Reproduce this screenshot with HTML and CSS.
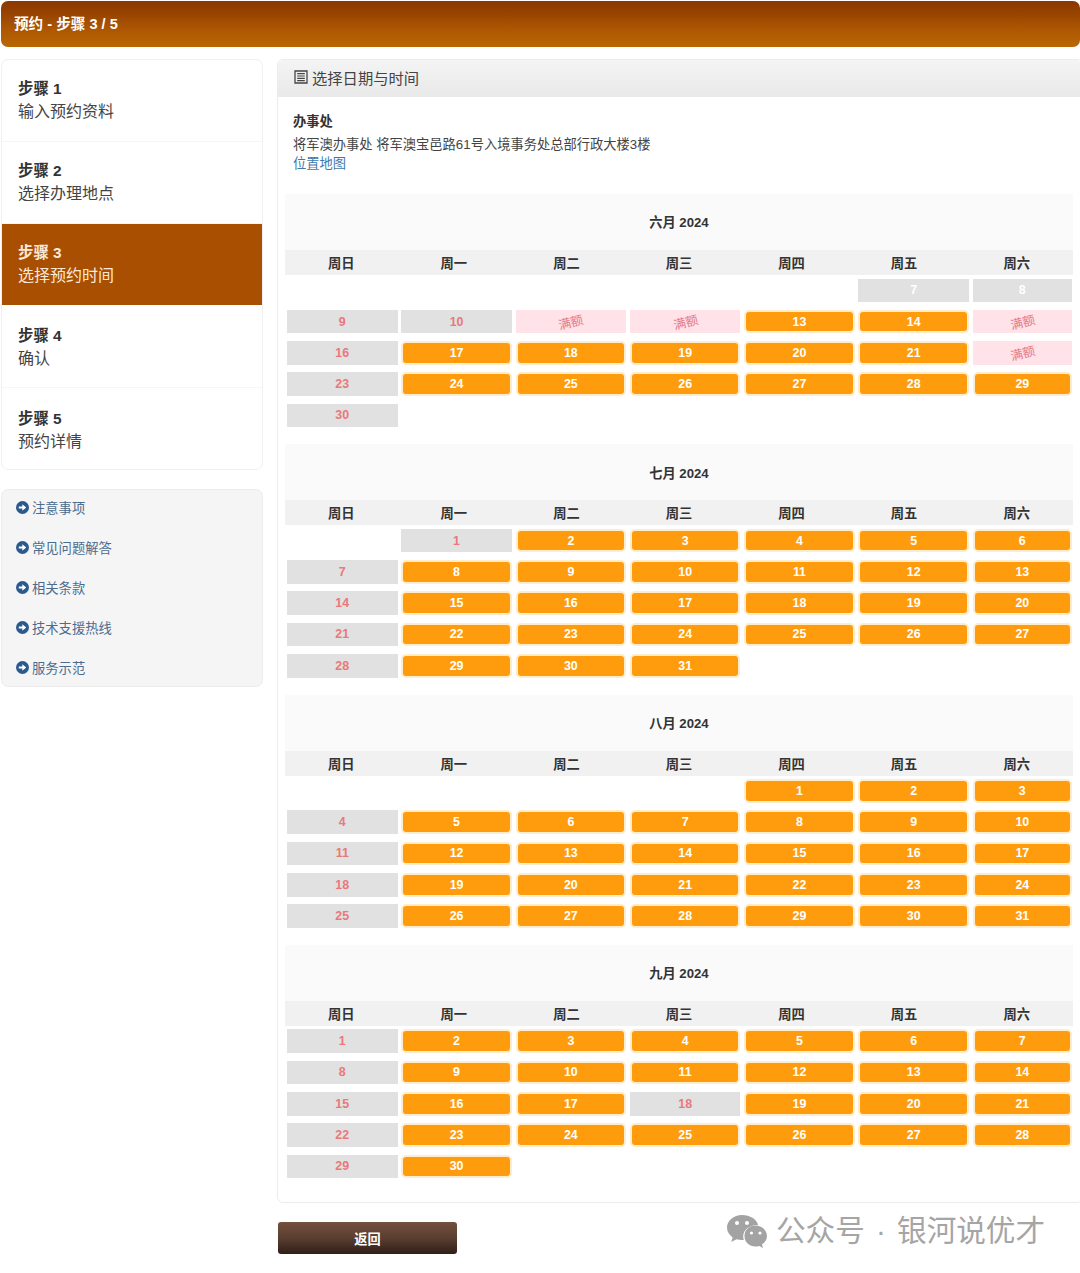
FILE: index.html
```html
<!DOCTYPE html>
<html lang="zh-CN">
<head>
<meta charset="utf-8">
<title>预约 - 步骤 3 / 5</title>
<link rel="stylesheet" href="styles.css">
</head>
<body>
<header class="topbar">预约 - 步骤 3 / 5</header>
<div class="layout">
  <aside class="side">
    <nav class="steps">
      <div class="step"><b>步骤 1</b><span>输入预约资料</span></div>
      <div class="step"><b>步骤 2</b><span>选择办理地点</span></div>
      <div class="step active"><b>步骤 3</b><span>选择预约时间</span></div>
      <div class="step"><b>步骤 4</b><span>确认</span></div>
      <div class="step"><b>步骤 5</b><span>预约详情</span></div>
    </nav>
    <nav class="links">
      <a class="link"><svg class="arrow" viewBox="0 0 14 14"><circle cx="7" cy="7" r="7"/><path d="M3 6h3.800V3.400L11 7 6.800 10.600V8H3z"/></svg>注意事项</a>
      <a class="link"><svg class="arrow" viewBox="0 0 14 14"><circle cx="7" cy="7" r="7"/><path d="M3 6h3.800V3.400L11 7 6.800 10.600V8H3z"/></svg>常见问题解答</a>
      <a class="link"><svg class="arrow" viewBox="0 0 14 14"><circle cx="7" cy="7" r="7"/><path d="M3 6h3.800V3.400L11 7 6.800 10.600V8H3z"/></svg>相关条款</a>
      <a class="link"><svg class="arrow" viewBox="0 0 14 14"><circle cx="7" cy="7" r="7"/><path d="M3 6h3.800V3.400L11 7 6.800 10.600V8H3z"/></svg>技术支援热线</a>
      <a class="link"><svg class="arrow" viewBox="0 0 14 14"><circle cx="7" cy="7" r="7"/><path d="M3 6h3.800V3.400L11 7 6.800 10.600V8H3z"/></svg>服务示范</a>
    </nav>
  </aside>
  <main class="content">
    <section class="panel">
      <h2 class="panel-head"><svg class="listicon" viewBox="0 0 14 14"><path d="M1 1h12v12H1z" fill="none" stroke="#444" stroke-width="1.300"/><path d="M3.200 3.700h7.600M3.200 6h7.600M3.200 8.300h7.600M3.200 10.600h7.600" stroke="#444" stroke-width="1.200"/></svg>选择日期与时间</h2>
      <div class="office">
        <b>办事处</b>
        <p>将军澳办事处 将军澳宝邑路61号入境事务处总部行政大楼3楼</p>
        <a>位置地图</a>
      </div>
      <div class="months">
        <section class="month">
          <h3>六月 2024</h3>
          <div class="week"><span>周日</span><span>周一</span><span>周二</span><span>周三</span><span>周四</span><span>周五</span><span>周六</span></div>
          <div class="days">
            <i></i><i></i><i></i><i></i><i></i><div class="c past">7</div><div class="c past">8</div>
            <div class="c off">9</div><div class="c off">10</div><div class="c full"><span>满额</span></div><div class="c full"><span>满额</span></div><div class="c on">13</div><div class="c on">14</div><div class="c full"><span>满额</span></div>
            <div class="c off">16</div><div class="c on">17</div><div class="c on">18</div><div class="c on">19</div><div class="c on">20</div><div class="c on">21</div><div class="c full"><span>满额</span></div>
            <div class="c off">23</div><div class="c on">24</div><div class="c on">25</div><div class="c on">26</div><div class="c on">27</div><div class="c on">28</div><div class="c on">29</div>
            <div class="c off">30</div>
          </div>
        </section>
        <section class="month">
          <h3>七月 2024</h3>
          <div class="week"><span>周日</span><span>周一</span><span>周二</span><span>周三</span><span>周四</span><span>周五</span><span>周六</span></div>
          <div class="days">
            <i></i><div class="c off">1</div><div class="c on">2</div><div class="c on">3</div><div class="c on">4</div><div class="c on">5</div><div class="c on">6</div>
            <div class="c off">7</div><div class="c on">8</div><div class="c on">9</div><div class="c on">10</div><div class="c on">11</div><div class="c on">12</div><div class="c on">13</div>
            <div class="c off">14</div><div class="c on">15</div><div class="c on">16</div><div class="c on">17</div><div class="c on">18</div><div class="c on">19</div><div class="c on">20</div>
            <div class="c off">21</div><div class="c on">22</div><div class="c on">23</div><div class="c on">24</div><div class="c on">25</div><div class="c on">26</div><div class="c on">27</div>
            <div class="c off">28</div><div class="c on">29</div><div class="c on">30</div><div class="c on">31</div>
          </div>
        </section>
        <section class="month">
          <h3>八月 2024</h3>
          <div class="week"><span>周日</span><span>周一</span><span>周二</span><span>周三</span><span>周四</span><span>周五</span><span>周六</span></div>
          <div class="days">
            <i></i><i></i><i></i><i></i><div class="c on">1</div><div class="c on">2</div><div class="c on">3</div>
            <div class="c off">4</div><div class="c on">5</div><div class="c on">6</div><div class="c on">7</div><div class="c on">8</div><div class="c on">9</div><div class="c on">10</div>
            <div class="c off">11</div><div class="c on">12</div><div class="c on">13</div><div class="c on">14</div><div class="c on">15</div><div class="c on">16</div><div class="c on">17</div>
            <div class="c off">18</div><div class="c on">19</div><div class="c on">20</div><div class="c on">21</div><div class="c on">22</div><div class="c on">23</div><div class="c on">24</div>
            <div class="c off">25</div><div class="c on">26</div><div class="c on">27</div><div class="c on">28</div><div class="c on">29</div><div class="c on">30</div><div class="c on">31</div>
          </div>
        </section>
        <section class="month">
          <h3>九月 2024</h3>
          <div class="week"><span>周日</span><span>周一</span><span>周二</span><span>周三</span><span>周四</span><span>周五</span><span>周六</span></div>
          <div class="days">
            <div class="c off">1</div><div class="c on">2</div><div class="c on">3</div><div class="c on">4</div><div class="c on">5</div><div class="c on">6</div><div class="c on">7</div>
            <div class="c off">8</div><div class="c on">9</div><div class="c on">10</div><div class="c on">11</div><div class="c on">12</div><div class="c on">13</div><div class="c on">14</div>
            <div class="c off">15</div><div class="c on">16</div><div class="c on">17</div><div class="c off">18</div><div class="c on">19</div><div class="c on">20</div><div class="c on">21</div>
            <div class="c off">22</div><div class="c on">23</div><div class="c on">24</div><div class="c on">25</div><div class="c on">26</div><div class="c on">27</div><div class="c on">28</div>
            <div class="c off">29</div><div class="c on">30</div>
          </div>
        </section>
      </div>
    </section>
    <button class="back" type="button">返回</button>
  </main>
</div>
<div class="watermark">
  <svg class="wechat" viewBox="0 0 40 33"><path d="M15 0C6.700 0 0 5.700 0 12.600c0 4 2.200 7.500 5.700 9.800L4.200 27l5.400-2.800c1.700.5 3.500.8 5.400.8.600 0 1.200 0 1.800-.1-.4-1.200-.6-2.400-.6-3.700C16.200 15 22.500 10 30 10c.4 0 .8 0 1.200.1C29.700 4.300 23 0 15 0z" fill="#a3a3a3"/><path d="M40 21c0-6-5.600-10.500-11.500-10.500C22.300 10.500 17.500 15 17.500 21s4.800 10.500 11 10.500c1.300 0 2.600-.2 3.800-.6l3.700 2.100-1-3.500C38 27.500 40 24.500 40 21z" fill="#a3a3a3"/><circle cx="10" cy="8" r="2" fill="#fff"/><circle cx="20" cy="8" r="2" fill="#fff"/><circle cx="24.500" cy="18" r="1.600" fill="#fff"/><circle cx="33" cy="18" r="1.600" fill="#fff"/></svg>
  <span>公众号 · 银河说优才</span>
</div>
</body>
</html>
```
FILE: styles.css
```css
* { box-sizing: border-box; }
html, body { margin: 0; padding: 0; }
body {
  width: 1080px;
  height: 1273px;
  overflow: hidden;
  position: relative;
  background: #fff;
  color: #333;
  font-family: "Liberation Sans", "Noto Sans CJK SC", sans-serif;
  font-size: 13.27px;
  padding-top: 1px;
}
.topbar {
  height: 46px;
  line-height: 46px;
  margin-left: 1px;
  padding-left: 13px;
  border-radius: 7px;
  background: linear-gradient(#8a3800 0%, #964200 25%, #ac5602 60%, #bb6604 100%);
  color: #fff;
  font-size: 14.6px;
  font-weight: bold;
}
.layout {
  display: flex;
  gap: 14px;
  margin-top: 12px;
  padding-left: 1px;
  width: 1083px;
}
.side {
  width: 262px;
  flex: none;
  display: flex;
  flex-direction: column;
  gap: 19px;
}
.steps {
  height: 411px;
  border: 1px solid #f0f0f0;
  border-radius: 7px;
  overflow: hidden;
}
.step {
  height: 82.500px;
  padding: 19px 16px 0;
  display: flex;
  flex-direction: column;
  border-bottom: 1px solid #f6f6f6;
  font-size: 16px;
  line-height: 23px;
  color: #444;
}
.step:nth-child(1) { height: 81.500px; padding-top: 17px; }
.step:nth-child(2) { padding-top: 17px; }
.step:last-child { border-bottom: 0; }
.step b { color: #333; font-size: 15.4px; }
.step.active {
  height: 81px;
  padding-top: 17px;
  background: #a94f02;
  color: #fbe9d8;
  border-bottom: 0;
}
.step.active b { color: #fbe9d8; }
.links {
  height: 198px;
  background: #f5f5f6;
  border: 1px solid #ececec;
  border-radius: 7px;
  padding: 7px 14px;
  display: flex;
  flex-direction: column;
  gap: 20px;
}
.link {
  height: 20px;
  flex: none;
  display: flex;
  align-items: center;
  gap: 3px;
  color: #4c6c8e;
  font-size: 13.3px;
}
.arrow { width: 13px; height: 13px; flex: none; }
.arrow circle { fill: #2a5a8c; }
.arrow path { fill: #fff; }
.content { flex: 1; min-width: 0; }
.panel {
  height: 1144px;
  border: 1px solid #ececec;
  border-radius: 6px;
  overflow: hidden;
}
.panel-head {
  margin: 0;
  height: 37px;
  display: flex;
  align-items: center;
  gap: 4px;
  padding: 0 0 3px 16px;
  background: linear-gradient(#f4f4f4, #e9e9e9);
  color: #444;
  font-size: 15.300px;
  font-weight: normal;
}
.listicon { width: 14px; height: 14px; flex: none; }
.office { padding: 14px 15px 0; height: 97px; line-height: 21px; }
.office b { display: block; color: #333; }
.office p { margin: 3px 0 0; line-height: 20px; color: #444; }
.office a { display: block; color: #3f78ad; line-height: 18px; }
.months { display: flex; flex-direction: column; padding-left: 7px; width: 795px; }
.month { height: 250.300px; flex: none; }
.month h3 {
  margin: 0;
  height: 56px;
  padding-top: 21.300px;
  background: #fafafa;
  color: #333;
  font-size: 13.200px;
  line-height: 16px;
  font-weight: bold;
  text-align: center;
}
.week {
  height: 25px;
  display: grid;
  grid-template-columns: repeat(7, 1fr);
  align-items: center;
  background: #f1f1f1;
  font-weight: bold;
  text-align: center;
  color: #333;
}
.days {
  display: grid;
  grid-template-columns: repeat(6, 110.500px) 99px;
  grid-auto-rows: 23.600px;
  gap: 7.700px 3.800px;
  padding: 3.500px 0 0 2px;
}
.c {
  display: flex;
  align-items: center;
  justify-content: center;
  font-size: 12.400px;
  font-weight: bold;
}
.on {
  background: #ff9c0d;
  border: 2px solid #ffeccb;
  border-radius: 5px;
  color: #fff;
}
.off { background: #e1e1e1; color: #e9787a; }
.past { background: #e1e1e1; color: #fff; }
.full { background: #ffe3e8; color: #e57888; overflow: hidden; }
.full span { display: block; transform: rotate(-14deg); font-size: 12.500px; font-weight: normal; }
.back {
  display: block;
  width: 179px;
  height: 32px;
  margin: 19px 0 0 1px;
  padding: 0;
  border: 0;
  border-radius: 3px;
  background: linear-gradient(#745040, #5a3e30 50%, #2f1f18);
  color: #fff;
  font-family: inherit;
  font-size: 13.200px;
  font-weight: bold;
}
.watermark {
  position: absolute;
  left: 727px;
  top: 1213px;
  display: flex;
  align-items: center;
  gap: 9px;
  color: #a5a5a5;
  font-size: 29.600px;
  line-height: 36px;
  word-spacing: 3px;
  white-space: nowrap;
}
.wechat { width: 40px; height: 33px; flex: none; }
```
